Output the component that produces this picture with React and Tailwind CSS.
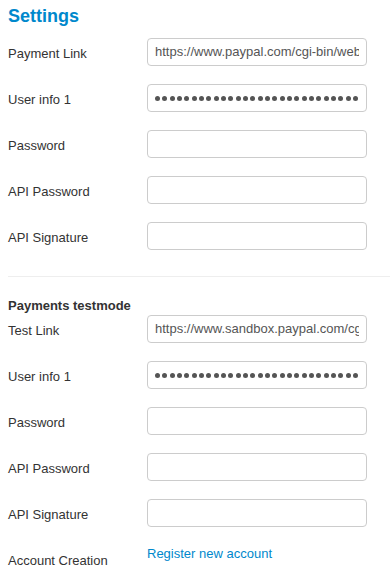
import React from "react";

function TextBox({ value }) {
  return (
    <div className="w-[220px] h-[28px] border border-[#cccccc] rounded-[4px] bg-white px-[7px] pt-[4px] shrink-0">
      <div className="overflow-hidden whitespace-nowrap leading-[18px] text-[13px] text-[#555555]">
        {value}
      </div>
    </div>
  );
}

function Dots() {
  const dots = Array.from({ length: 32 });
  return (
    <div className="w-[220px] h-[28px] border border-[#cccccc] rounded-[4px] bg-white px-[7px] flex items-center shrink-0">
      <div className="overflow-hidden w-full flex items-center h-[8px]">
        <div className="flex items-center gap-[2.33px]">
          {dots.map((_, i) => (
            <span key={i} className="block w-[5px] h-[5px] rounded-full bg-[#555555] shrink-0" />
          ))}
        </div>
      </div>
    </div>
  );
}

function Row({ label, children }) {
  return (
    <div className="flex items-start h-[28px] mb-[18px]">
      <div className="w-[139px] shrink-0 pt-[7px] leading-[18px] text-[#333333]">{label}</div>
      {children}
    </div>
  );
}

export default function App() {
  return (
    <div className="bg-white w-[390px] min-h-[588px] font-['Liberation_Sans',Arial,sans-serif] text-[13px] text-[#333333]">
      <div className="pl-[8px] flex flex-col">
        <h2 className="pt-[5px] text-[18px] leading-[22px] font-bold text-[#0088cc]">Settings</h2>
        <div className="mt-[11px] flex flex-col">
          <Row label="Payment Link">
            <TextBox value="https://www.paypal.com/cgi-bin/webscr" />
          </Row>
          <Row label="User info 1">
            <Dots />
          </Row>
          <Row label="Password">
            <TextBox value="" />
          </Row>
          <Row label="API Password">
            <TextBox value="" />
          </Row>
          <Row label="API Signature">
            <TextBox value="" />
          </Row>
        </div>
        <div className="mt-[8px] h-px bg-[#eeeeee]" />
        <h3 className="mt-[20px] font-bold leading-[18px] text-[#333333]">Payments testmode</h3>
        <div className="flex flex-col">
          <Row label="Test Link">
            <TextBox value="https://www.sandbox.paypal.com/cgi-bin/webscr" />
          </Row>
          <Row label="User info 1">
            <Dots />
          </Row>
          <Row label="Password">
            <TextBox value="" />
          </Row>
          <Row label="API Password">
            <TextBox value="" />
          </Row>
          <Row label="API Signature">
            <TextBox value="" />
          </Row>
          <div className="flex items-start">
            <div className="w-[139px] shrink-0 pt-[7px] leading-[18px] text-[#333333]">Account Creation</div>
            <a href="#" className="leading-[18px] text-[#0088cc] hover:underline">Register new account</a>
          </div>
        </div>
      </div>
    </div>
  );
}
